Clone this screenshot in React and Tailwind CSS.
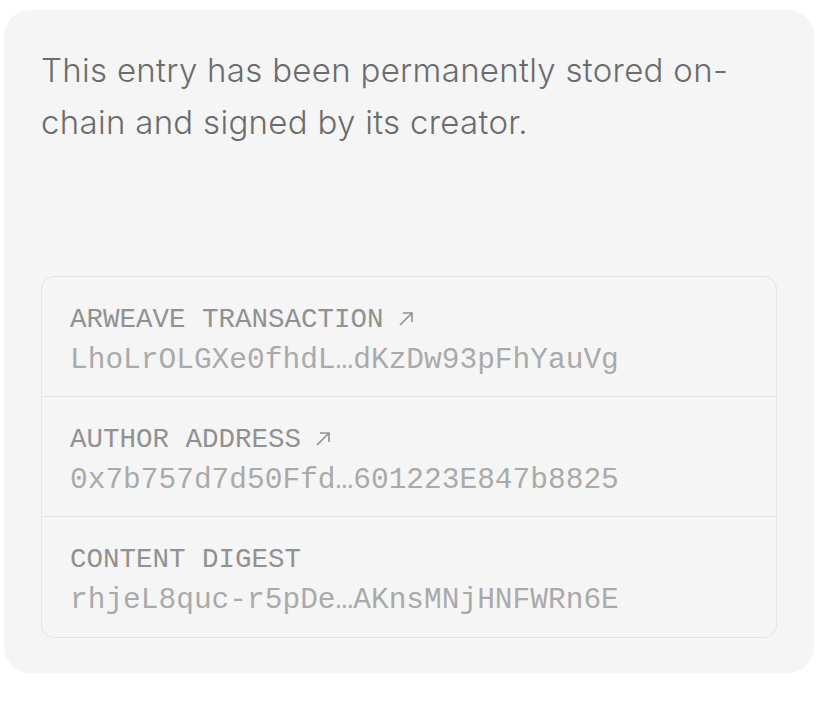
const rows = [
  { label: "ARWEAVE TRANSACTION", value: "LhoLrOLGXe0fhdL…dKzDw93pFhYauVg", link: true },
  { label: "AUTHOR ADDRESS", value: "0x7b757d7d50Ffd…601223E847b8825", link: true },
  { label: "CONTENT DIGEST", value: "rhjeL8quc-r5pDe…AKnsMNjHNFWRn6E", link: false },
];

const ArrowUpRight = () => (
  <svg width="16" height="16" viewBox="0 0 16 16" fill="none" className="ml-[14px] mb-[2px]">
    <path d="M2 14L14 2M5 2h9v9" stroke="currentColor" strokeWidth="1.6" />
  </svg>
);

export default function App() {
  return (
    <div className="min-h-screen bg-white pt-[10px] pl-[4px]">
      <div
        className="w-[810px] rounded-[26px] bg-[#f5f5f5] px-[37px] pt-[34px] pb-[35px]"
        style={{ fontFamily: "Inter, 'Noto Sans', sans-serif" }}
      >
        <p className="text-[33px] leading-[52px] tracking-[0.3px] font-light text-[#6c6c6c]">
          This entry has been permanently stored on-chain and signed by its creator.
        </p>

        <div className="mt-[128px] rounded-[13px] border border-[#e4e4e4] divide-y divide-[#e4e4e4]">
          {rows.map((r) => (
            <div
              key={r.label}
              className="h-[120px] px-[28px] pt-[25px]"
              style={{ fontFamily: "'Liberation Mono', monospace" }}
            >
              <div className="flex items-center text-[27.5px] leading-[36px] text-[#919191]">
                {r.label}
                {r.link && <ArrowUpRight />}
              </div>
              <div className="mt-[2px] text-[29.5px] leading-[40px] text-[#aaaaaa]">{r.value}</div>
            </div>
          ))}
        </div>
      </div>
    </div>
  );
}
